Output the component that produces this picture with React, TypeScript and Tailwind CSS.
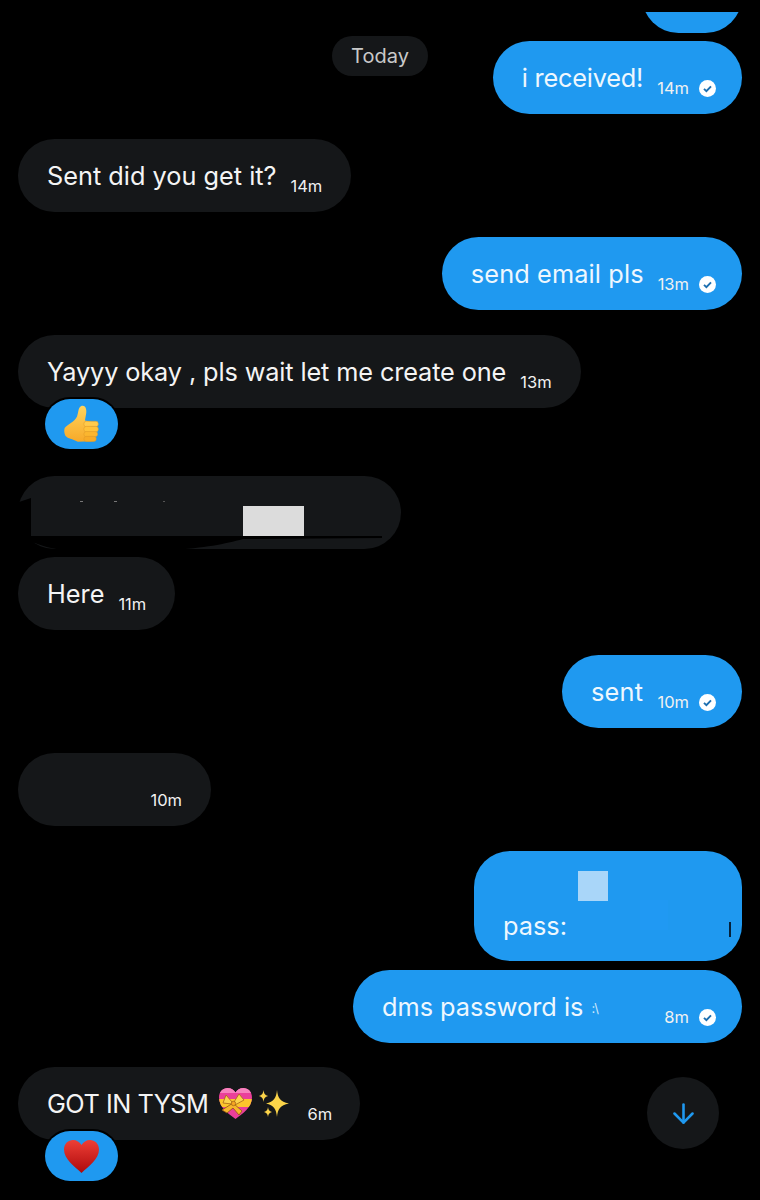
import React from "react";
import { ArrowDown } from "lucide-react";

const font = { fontFamily: "Inter, 'Noto Sans', sans-serif" };

const Check = () => (
  <svg width="17" height="17" viewBox="0 0 17 17" className="mt-[21px] ml-[10px] shrink-0">
    <circle cx="8.5" cy="8.5" r="8.5" fill="#fff" />
    <path d="M5 8.8l2.4 2.4L12 6.3" fill="none" stroke="#1d6fb0" strokeWidth="1.9" />
  </svg>
);

const Time = ({ children }: { children: React.ReactNode }) => (
  <span className="mt-[21px] text-[16.5px] leading-[20px] shrink-0 text-[#f1f1f1]">{children}</span>
);

const Sent = ({ text, time, tracking = "" }: { text: string; time: string; tracking?: string }) => (
  <div className="self-end flex items-center h-[73px] rounded-[37px] bg-[#1f99f0] pl-[29px] pr-[26px]">
    <span className={`text-[25.3px] leading-[32px] text-[#eef7fe] mr-[14px] ${tracking}`}>{text}</span>
    <Time>{time}</Time>
    <Check />
  </div>
);

const Received = ({ text, time, tracking = "" }: { text: string; time: string; tracking?: string }) => (
  <div className="self-start flex items-center h-[73px] rounded-[37px] bg-[#151719] pl-[29px] pr-[29px]">
    <span className={`text-[25.3px] leading-[32px] text-[#f4f4f4] mr-[14px] ${tracking}`}>{text}</span>
    <Time>{time}</Time>
  </div>
);

const Reaction = ({ children }: { children: React.ReactNode }) => (
  <div className="relative ml-[27px] -mt-[9px] flex items-center justify-center w-[73px] h-[50px] rounded-[25px] bg-[#1f99f0] ring-2 ring-black">
    {children}
  </div>
);

const ThumbsUp = () => (
  <svg width="35" height="38" viewBox="70 35 102 110">
    <defs>
      <linearGradient id="thumb" x1="0" y1="0" x2="0" y2="1">
        <stop offset="0" stopColor="#ffd45e" />
        <stop offset="1" stopColor="#f7a928" />
      </linearGradient>
    </defs>
    <path
      d="M72 102C80 90 100 86 108 68C113 56 110 42 122 37C134 35 138 50 133 68L131 80L150 84L150 140L110 142C94 132 82 134 74 124C70 116 70 108 72 102Z"
      fill="url(#thumb)"
    />
    <rect x="128" y="82" width="42" height="16" rx="7" fill="#ffcb4c" stroke="#e09a2a" strokeWidth="1.500" />
    <rect x="128" y="97" width="42" height="16" rx="7" fill="#ffc23a" stroke="#e09a2a" strokeWidth="1.500" />
    <rect x="128" y="112" width="40" height="15" rx="7" fill="#fbb62f" stroke="#e09a2a" strokeWidth="1.500" />
    <rect x="128" y="126" width="36" height="15" rx="7" fill="#f7ab27" stroke="#e09a2a" strokeWidth="1.500" />
  </svg>
);

const RedHeart = () => (
  <svg width="35" height="33" viewBox="0 0 35 33">
    <defs>
      <linearGradient id="red" x1="0" y1="0" x2="0" y2="1">
        <stop offset="0" stopColor="#ee3f36" />
        <stop offset="1" stopColor="#ad0a0c" />
      </linearGradient>
    </defs>
    <path d="M17.5 33C10 26 0 19 0 9.500C0 3.800 4.200 0 9 0C12.600 0 15.800 2 17.500 5C19.200 2 22.400 0 26 0C30.800 0 35 3.800 35 9.500C35 19 25 26 17.500 33Z" fill="url(#red)" />
  </svg>
);

const GiftHeart = () => (
  <svg width="33" height="31" viewBox="0 0 33 31" className="shrink-0">
    <defs>
      <clipPath id="giftClip">
        <path d="M16.500 31C10 26 0 19.500 0 9.500C0 3.800 4 0 8.600 0C12 0 15 1.800 16.500 4.600C18 1.800 21 0 24.400 0C29 0 33 3.800 33 9.500C33 19.500 23 26 16.500 31Z" />
      </clipPath>
    </defs>
    <g clipPath="url(#giftClip)">
      <rect width="33" height="31" fill="#ea3f9a" />
      <rect y="0" width="33" height="5" fill="#f682bd" />
      <rect y="11" width="33" height="8" fill="#fcc52b" />
    </g>
    <path d="M13 14L7 7L4 15L13 16ZM15 14L20 6L25 12L16 17Z" fill="#fcd34d" stroke="#a8641a" strokeWidth="0.8" />
    <path d="M14 15L3 22L8 25L14 20L20 27L23 23Z" fill="#f7b52c" stroke="#8f5414" strokeWidth="0.8" />
    <circle cx="14.500" cy="15.500" r="2.200" fill="#f5a623" stroke="#8f5414" strokeWidth="0.6" />
  </svg>
);

const Sparkles = () => (
  <svg width="30" height="27" viewBox="0 0 30 27" className="shrink-0 ml-[7px]">
    <path d="M18 0C18.800 8 21 11.500 30 13.500C21 15.500 18.800 19 18 27C17.200 19 15 15.500 7 13.500C15 11.500 17.200 8 18 0Z" fill="#fbd449" />
    <path d="M4.500 0C5 3.500 5.800 5 9 6C5.800 7 5 8.500 4.500 12C4 8.500 3.200 7 0 6C3.200 5 4 3.500 4.500 0Z" fill="#fbd449" />
    <path d="M9 17C9.400 20 10.200 21 13 22C10.200 23 9.400 24 9 27C8.600 24 7.800 23 5 22C7.800 21 8.600 20 9 17Z" fill="#fbd449" />
  </svg>
);

export default function App() {
  return (
    <div className="relative h-[1200px] w-[760px] overflow-hidden bg-black pt-[12px] px-[18px] flex flex-col" style={font}>
      {/* cut off message at the top */}
      <div className="self-end h-[21px] w-[100px] overflow-hidden">
        <div className="-mt-[52px] h-[73px] rounded-[37px] bg-[#1f99f0]" />
      </div>

      <div className="mt-[8px] flex items-start">
        <div className="ml-[314px] -mt-[5px] flex h-[40px] w-[96px] items-center justify-center rounded-[20px] bg-[#151719] text-[20px] text-[#c9c9c9]">
          Today
        </div>
        <div className="ml-auto flex">
          <Sent text="i received!" time="14m" tracking="tracking-[-0.2px]" />
        </div>
      </div>

      <div className="mt-[25px] flex flex-col">
        <Received text="Sent did you get it?" time="14m" />
      </div>
      <div className="mt-[25px] flex flex-col">
        <Sent text="send email pls" time="13m" tracking="tracking-[0.12px]" />
      </div>
      <div className="mt-[25px] flex flex-col">
        <Received text="Yayyy okay , pls wait let me create one" time="13m" tracking="tracking-[-0.12px]" />
        <Reaction>
          <ThumbsUp />
        </Reaction>
      </div>

      {/* redacted message */}
      <div className="relative mt-[27px] h-[73px] w-[383px] rounded-[37px] bg-[#151719]">
        <svg width="383" height="74" viewBox="18 476 383 74" className="absolute left-0 top-0">
          <path d="M16 503L19 502L31 498L31 536L382 536L382 538L243 539C225 544 205 548 170 550L62 550C50 548 42 546 35 543L16 540Z" fill="#000" />
          <rect x="243" y="506" width="61" height="30" fill="#dcdcdc" />
          <rect x="80" y="501" width="3" height="1" fill="#777" />
          <rect x="114" y="501" width="3" height="1" fill="#777" />
          <rect x="163" y="501" width="2" height="1" fill="#555" />
        </svg>
      </div>
      <div className="mt-[8px] flex flex-col">
        <Received text="Here" time="11m" />
      </div>
      <div className="mt-[25px] flex flex-col">
        <Sent text="sent" time="10m" tracking="tracking-[0.3px]" />
      </div>
      <div className="mt-[25px] flex h-[73px] w-[193px] items-center justify-end rounded-[37px] bg-[#151719] pr-[29px]">
        <Time>10m</Time>
      </div>

      {/* password message */}
      <div className="relative mt-[25px] self-end flex h-[110px] w-[268px] items-end rounded-[36px] bg-[#1f99f0] pl-[29px] pb-[19px]">
        <span className="text-[25.3px] leading-[32px] text-[#eef7fe]">pass:</span>
        <div className="absolute left-[104px] top-[20px] h-[30px] w-[30px] bg-[#a9d6f9]" />
        <div className="absolute left-[166px] top-[49px] h-[30px] w-[28px] bg-[#2099f3]" />
        <div className="absolute left-[255px] top-[71px] h-[15px] w-[1.500px] bg-[#06223a]" />
      </div>
      <div className="mt-[9px] self-end flex h-[73px] w-[389px] items-center rounded-[37px] bg-[#1f99f0] pl-[29px] pr-[26px]">
        <span className="text-[25.3px] leading-[32px] text-[#eef7fe]">dms password is</span>
        <span className="ml-[8px] mt-[3px] text-[13px] leading-[12px] text-[#cfe8fb]">:\</span>
        <span className="ml-auto flex items-center">
          <Time>8m</Time>
          <Check />
        </span>
      </div>

      <div className="mt-[24px] flex flex-col">
        <div className="self-start flex items-center h-[73px] rounded-[37px] bg-[#151719] pl-[29px] pr-[28px]">
          <span className="text-[25.3px] leading-[32px] tracking-[-0.5px] text-[#f4f4f4] mr-[11px]">GOT IN TYSM</span>
          <GiftHeart />
          <Sparkles />
          <span className="ml-[18px] flex">
            <Time>6m</Time>
          </span>
        </div>
        <Reaction>
          <RedHeart />
        </Reaction>
      </div>

      {/* scroll to bottom */}
      <div className="absolute left-[647px] top-[1077px] flex h-[72px] w-[72px] items-center justify-center rounded-full bg-[#151719]">
        <ArrowDown size={31} strokeWidth={2} color="#1f99f0" />
      </div>
    </div>
  );
}
